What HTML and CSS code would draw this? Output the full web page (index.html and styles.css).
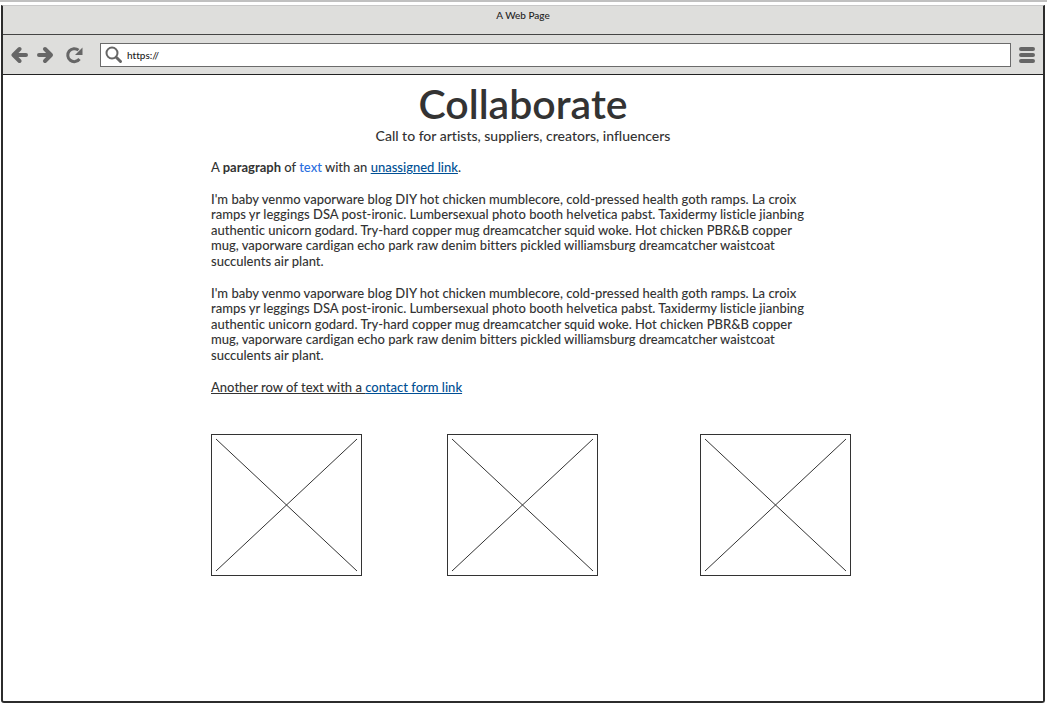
FILE: index.html
```html
<!DOCTYPE html>
<html lang="en">
<head>
<meta charset="utf-8">
<title>A Web Page</title>
<link rel="stylesheet" href="styles.css">
</head>
<body>
<div class="window">
  <div class="titlebar">A Web Page</div>
  <div class="toolbar">
    <nav class="nav">
      <button class="icon-btn" type="button" aria-label="Back">
        <svg width="18" height="18" viewBox="0 0 18 18"><path d="M8.500 3 2.500 9l6 6M3 9h12" class="thick"/></svg>
      </button>
      <button class="icon-btn" type="button" aria-label="Forward">
        <svg width="18" height="18" viewBox="0 0 18 18"><path d="M9 3l6 6-6 6M14 9H3" class="thick"/></svg>
      </button>
      <button class="icon-btn reload" type="button" aria-label="Reload">
        <svg width="18" height="18" viewBox="0 0 18 18"><path d="M14.500 13A6.500 6.500 0 1 1 13.500 4.200" class="ring"/><path d="M17.500 1.500v7.500h-7.500z" class="solid"/></svg>
      </button>
    </nav>
    <label class="address">
      <svg width="18" height="18" viewBox="0 0 18 18"><circle cx="7" cy="7" r="5.500" class="lens"/><path d="m11.500 11.500 4 4" class="handle"/></svg>
      <input class="url" type="text" value="https://" aria-label="Address">
    </label>
    <button class="icon-btn" type="button" aria-label="Menu">
      <svg width="18" height="18" viewBox="0 0 18 18"><path d="M3 3h12M3 9h12M3 15h12" class="bars"/></svg>
    </button>
  </div>
  <main class="page">
    <header class="hero">
      <h1 class="title">Collaborate</h1>
      <p class="tagline">Call to for artists, suppliers, creators, influencers</p>
    </header>
    <section class="content">
      <p>A <strong>paragraph</strong> of <span class="accent">text</span> with an <a href="#">unassigned link</a>.</p>
      <p>I'm baby venmo vaporware blog DIY hot chicken mumblecore, cold-pressed health goth ramps. La croix<br>ramps yr leggings DSA post-ironic. Lumbersexual photo booth helvetica pabst. Taxidermy listicle jianbing<br>authentic unicorn godard. Try-hard copper mug dreamcatcher squid woke. Hot chicken PBR&amp;B copper<br>mug, vaporware cardigan echo park raw denim bitters pickled williamsburg dreamcatcher waistcoat<br>succulents air plant.</p>
      <p>I'm baby venmo vaporware blog DIY hot chicken mumblecore, cold-pressed health goth ramps. La croix<br>ramps yr leggings DSA post-ironic. Lumbersexual photo booth helvetica pabst. Taxidermy listicle jianbing<br>authentic unicorn godard. Try-hard copper mug dreamcatcher squid woke. Hot chicken PBR&amp;B copper<br>mug, vaporware cardigan echo park raw denim bitters pickled williamsburg dreamcatcher waistcoat<br>succulents air plant.</p>
      <p><u>Another row of text with a </u><a href="#">contact form link</a></p>
      <div class="gallery">
        <svg class="placeholder" viewBox="0 0 149 140" role="img" aria-label="Image placeholder"><path d="M4 4l141 132M145 4L4 136"/></svg>
        <svg class="placeholder" viewBox="0 0 149 140" role="img" aria-label="Image placeholder"><path d="M4 4l141 132M145 4L4 136"/></svg>
        <svg class="placeholder last" viewBox="0 0 149 140" role="img" aria-label="Image placeholder"><path d="M4 4l141 132M145 4L4 136"/></svg>
      </div>
    </section>
  </main>
</div>
</body>
</html>
```
FILE: styles.css
```css
* { box-sizing: border-box; }
body {
  margin: 0;
  min-height: 100vh;
  display: flex;
  flex-direction: column;
  padding: 3px 2px 4px 1px;
  border-top: 2px solid #c0c0c0;
  background: #fff;
  color: #333;
  font-family: Lato, "Liberation Sans", sans-serif;
  font-size: 13px;
  font-variant-ligatures: none;
  line-height: 1.2;
}
.window {
  flex: 1;
  display: flex;
  flex-direction: column;
  border: 2px solid #2c2c2c;
  border-top: 1px solid #c8c8c8;
  border-radius: 0 0 3px 3px;
}
.titlebar {
  height: 29px;
  padding-top: 3px;
  border-bottom: 1px solid #444;
  background: #dededc;
  color: #222;
  font-size: 10px;
  font-weight: 500;
  text-align: center;
}
.toolbar {
  display: flex;
  align-items: center;
  gap: 7px;
  height: 40px;
  padding: 0 7px 0 8px;
  border-bottom: 1px solid #222;
  background: #dededc;
}
.nav { display: flex; gap: 7px; padding-right: 10px; }
.icon-btn {
  display: block;
  padding: 0;
  border: 0;
  background: none;
  line-height: 0;
}
.reload { margin-left: 4px; }
.address {
  flex: 1;
  display: flex;
  align-items: center;
  gap: 4px;
  height: 24px;
  padding-left: 4px;
  border: 1px solid #6b6b6b;
  background: #fff;
}
.url {
  flex: 1;
  min-width: 0;
  padding: 0;
  border: 0;
  outline: 0;
  background: none;
  color: #222;
  font: 500 10px Lato, "Liberation Sans", sans-serif;
  font-variant-ligatures: none;
}
.thick, .ring, .lens, .handle, .bars { fill: none; stroke: #666; stroke-linecap: round; stroke-linejoin: round; }
.thick { stroke-width: 4; }
.ring { stroke-width: 3; stroke-linecap: butt; }
.lens { stroke-width: 2; }
.handle { stroke-width: 3; }
.bars { stroke-width: 4; }
.solid { fill: #666; }
.page { flex: 1; }
.hero { padding-top: 4px; text-align: center; }
.title { margin: 0; font-size: 41px; font-weight: 600; }
.tagline { margin: 0; font-size: 14px; font-weight: 500; }
.content { padding: 15px 0 16px 20%; font-weight: 500; white-space: nowrap; }
.content p { margin: 0 0 16px; }
.content a { color: #004f94; }
.accent { color: #2a6fe0; }
.gallery { display: flex; gap: 85px; padding-top: 23px; }
.placeholder {
  flex: none;
  width: 151px;
  height: 142px;
  border: 1px solid #333;
  fill: none;
  stroke: #333;
}
.last { margin-left: 17px; }
```
